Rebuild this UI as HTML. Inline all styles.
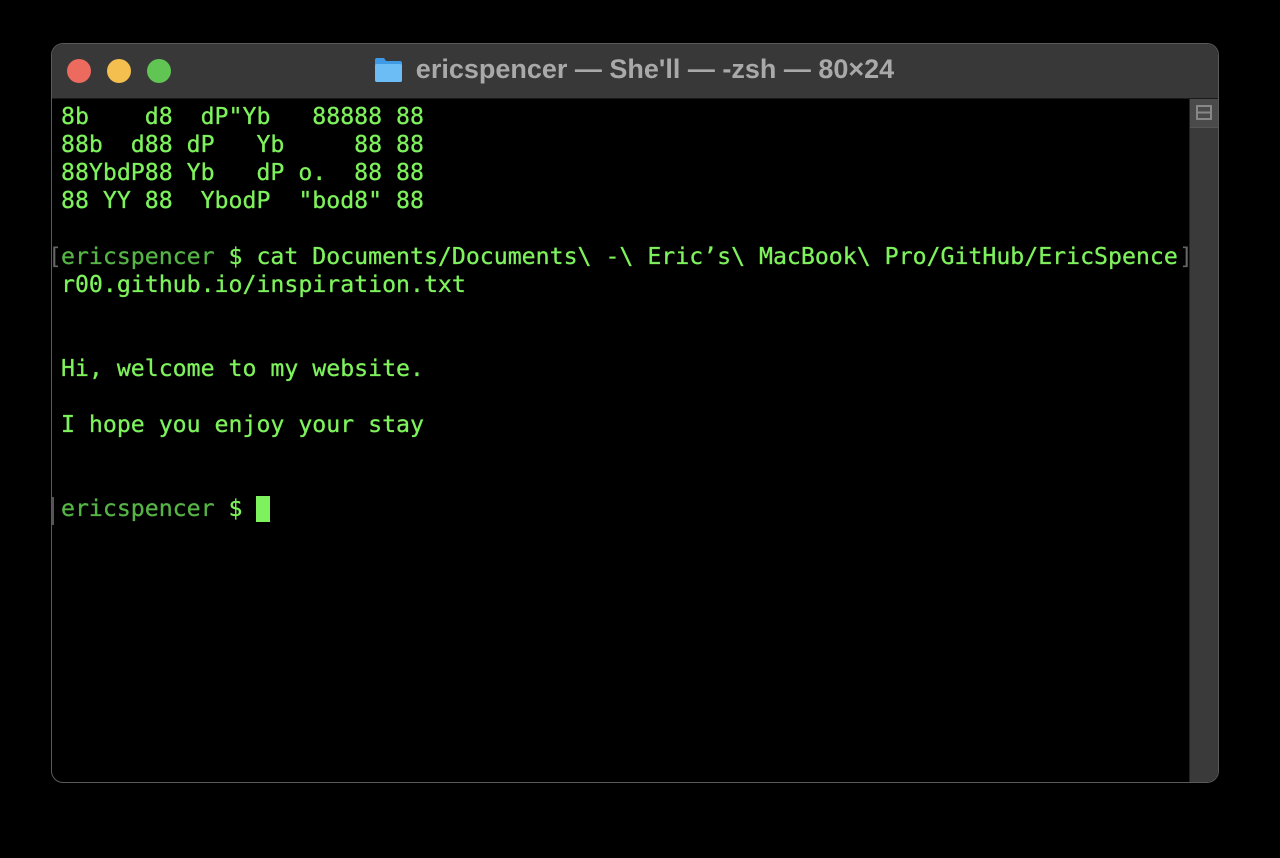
<!DOCTYPE html>
<html><head><style>
html,body{margin:0;padding:0;background:#000;width:1280px;height:858px;overflow:hidden}
.win{position:absolute;left:51px;top:43px;width:1166px;height:738px;border:1px solid #5a5a5a;border-radius:12px;overflow:hidden;background:#000}
.title{position:absolute;left:0;top:0;right:0;height:54px;background:#383838;border-bottom:1px solid #1a1a1a}
.dot{position:absolute;top:15px;width:24px;height:24px;border-radius:50%}
.ttl{position:absolute;left:0;right:0;top:10px;text-align:center;font:bold 27px "Liberation Sans",sans-serif;color:#a9a9a9;padding-left:40px}
.folder{position:absolute;left:322px;top:13px;width:29px;height:26px}
.term{position:absolute;left:9px;top:59px;font-family:"DejaVu Sans Mono","Liberation Mono",monospace;font-size:23.2px;line-height:28px;color:#7ef25c;white-space:pre;-webkit-text-stroke:0.3px #7ef25c}
.p{color:#56b446;-webkit-text-stroke:0.3px #56b446}
.br{position:absolute;font-family:"DejaVu Sans Mono",monospace;font-size:23.2px;color:#666;line-height:28px}
.sb{position:absolute;right:0;top:55px;width:28px;bottom:0;background:#3a3a3a;border-left:1px solid #222}
.sbb{position:absolute;left:0;top:0;width:28px;height:28px;background:#4a4a4a;border-bottom:1px solid #555}
.cur{display:inline-block;width:14px;height:26px;background:#7ef25c;vertical-align:-6px}
.mk{position:absolute;width:2px;background:#555}
</style></head><body>
<div class="win">
 <div class="title">
  <div class="dot" style="left:15px;background:#ec6a5e"></div>
  <div class="dot" style="left:55px;background:#f4bf4f"></div>
  <div class="dot" style="left:95px;background:#61c554"></div>
  <svg class="folder" viewBox="0 0 29 26"><path d="M1 3 Q1 1 3 1 H10 L12 4 H26 Q28 4 28 6 V23 Q28 25 26 25 H3 Q1 25 1 23Z" fill="#3f9ae6"/><rect x="1" y="7" width="27" height="18" rx="2" fill="#6cbcf5"/></svg>
  <div class="ttl">ericspencer — She'll — -zsh — 80×24</div>
 </div>
 <div class="br" style="left:-4px;top:199px">[</div>
 <div class="br" style="left:1127px;top:199px">]</div>
 <div class="mk" style="left:0;top:453px;height:28px"></div>
 <div class="term">8b    d8  dP"Yb   88888 88
88b  d88 dP   Yb     88 88
88YbdP88 Yb   dP o.  88 88
88 YY 88  YbodP  "bod8" 88

<span class="p">ericspencer</span> $ cat Documents/Documents\ -\ Eric’s\ MacBook\ Pro/GitHub/EricSpence
r00.github.io/inspiration.txt


Hi, welcome to my website.

I hope you enjoy your stay


<span class="p">ericspencer</span> $ <span class="cur"></span></div>
 <div class="sb"><div class="sbb"><svg width="28" height="28"><rect x="7" y="7" width="14" height="13" fill="none" stroke="#888" stroke-width="2"/><line x1="7" y1="13.5" x2="21" y2="13.5" stroke="#888" stroke-width="2"/></svg></div></div>
</div>
</body></html>
